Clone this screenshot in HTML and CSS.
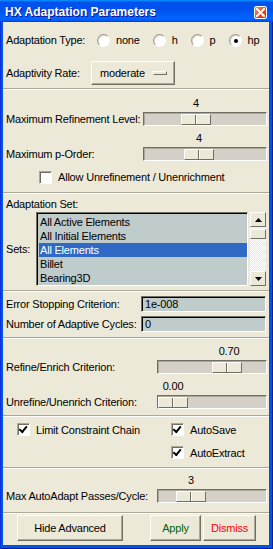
FILE: index.html
```html
<!DOCTYPE html>
<html lang="en">
<head>
  <meta charset="UTF-8" />
  <title>HX Adaptation Parameters</title>
  <link rel="stylesheet" href="styles.css">
</head>
<body>

  <div class="window">
    <div class="titlebar">
      <span class="title">HX Adaptation Parameters</span>
      <span class="close-btn">
        <svg width="9" height="9" viewBox="0 0 9 9"><path d="M1 1 L8 8 M8 1 L1 8" stroke="#fff" stroke-width="2" stroke-linecap="square"/></svg>
      </span>
    </div>

    <div class="content">

      <section class="group group-type">
        <div class="radio-row">
          <span class="lbl lbl-type">Adaptation Type:</span>
          <span class="radio"><span class="radio-circle"></span>none</span>
          <span class="radio"><span class="radio-circle"></span>h</span>
          <span class="radio"><span class="radio-circle"></span>p</span>
          <span class="radio"><span class="radio-circle checked"></span>hp</span>
        </div>
        <div class="rate-row">
          <span class="lbl lbl-rate">Adaptivity Rate:</span>
          <span class="menubutton">moderate<span class="indicator"></span></span>
        </div>
      </section>

      <hr class="sep">

      <section class="group group-levels">
        <div class="scale-row narrow">
          <span class="scale-label">Maximum Refinement Level:</span>
          <div class="scale-value-line"><span class="scale-value" style="left:53px">4</span></div>
          <div class="trough"><span class="thumb" style="left:37px"></span></div>
        </div>
        <div class="scale-row narrow second">
          <span class="scale-label">Maximum p-Order:</span>
          <div class="scale-value-line"><span class="scale-value" style="left:56px">4</span></div>
          <div class="trough"><span class="thumb" style="left:40px"></span></div>
        </div>
        <div class="check-row allow-row">
          <span class="checkbox"></span>Allow Unrefinement / Unenrichment
        </div>
      </section>

      <hr class="sep">

      <section class="group group-sets">
        <div class="sets-title">Adaptation Set:</div>
        <div class="sets-row">
          <span class="lbl lbl-sets">Sets:</span>
          <ul class="listbox">
            <li>All Active Elements</li>
            <li>All Initial Elements</li>
            <li class="selected">All Elements</li>
            <li>Billet</li>
            <li>Bearing3D</li>
          </ul>
          <div class="scrollbar">
            <span class="sb-btn"><svg width="7" height="4" viewBox="0 0 7 4"><path d="M3.5 0 L7 4 L0 4 Z" fill="#000"/></svg></span>
            <span class="sb-track"><span class="sb-thumb"></span></span>
            <span class="sb-btn"><svg width="7" height="4" viewBox="0 0 7 4"><path d="M0 0 L7 0 L3.5 4 Z" fill="#000"/></svg></span>
          </div>
        </div>
      </section>

      <hr class="sep">

      <section class="group group-entries">
        <div class="entry-row">
          <span class="lbl lbl-entry">Error Stopping Criterion:</span>
          <span class="entry">1e-008</span>
        </div>
        <div class="entry-row">
          <span class="lbl lbl-entry">Number of Adaptive Cycles:</span>
          <span class="entry">0</span>
        </div>
      </section>

      <hr class="sep">

      <section class="group group-criteria">
        <div class="scale-row wide">
          <span class="scale-label">Refine/Enrich Criterion:</span>
          <div class="scale-value-line"><span class="scale-value" style="left:72px">0.70</span></div>
          <div class="trough"><span class="thumb" style="left:54px"></span></div>
        </div>
        <div class="scale-row wide second">
          <span class="scale-label">Unrefine/Unenrich Criterion:</span>
          <div class="scale-value-line"><span class="scale-value" style="left:16px">0.00</span></div>
          <div class="trough"><span class="thumb" style="left:0px"></span></div>
        </div>
      </section>

      <hr class="sep">

      <section class="group group-checks">
        <div class="check-grid">
          <div class="check-row"><span class="checkbox checked"></span>Limit Constraint Chain</div>
          <div class="check-row"><span class="checkbox checked"></span>AutoSave</div>
          <div></div>
          <div class="check-row"><span class="checkbox checked"></span>AutoExtract</div>
        </div>
      </section>

      <hr class="sep">

      <section class="group group-passes">
        <div class="scale-row wide tight">
          <span class="scale-label">Max AutoAdapt Passes/Cycle:</span>
          <div class="scale-value-line"><span class="scale-value" style="left:34px">3</span></div>
          <div class="trough"><span class="thumb" style="left:18px"></span></div>
        </div>
      </section>

      <hr class="sep">

      <section class="group group-buttons">
        <button class="btn btn-hide">Hide Advanced</button>
        <button class="btn btn-apply">Apply</button>
        <button class="btn btn-dismiss">Dismiss</button>
      </section>

    </div>
  </div>

</body>
</html>
```

FILE: styles.css
```css
body {
  margin: 0;
  padding: 0;
  font-family: "Liberation Sans", Arial, sans-serif;
  font-size: 11px;
  letter-spacing: -0.2px;
  color: #000;
}

.window {
  width: 273px;
  height: 549px;
  display: flex;
  flex-direction: column;
  background: #0054e3;
  box-shadow: inset 1px 0 #0831d9, inset -1px 0 #001ea0, inset 0 -1px #001ea0;
}

/* title bar */
.titlebar {
  height: 22px;
  flex: none;
  display: flex;
  align-items: center;
  background: linear-gradient(#0997ff, #0053ee 10%, #0050ee 40%, #0066ff 85%, #005bff 92%, #003dd7);
}

.title {
  flex: 1;
  padding-left: 5px;
  padding-top: 1px;
  color: #fff;
  font-weight: bold;
  font-size: 12px;
  letter-spacing: 0;
  text-shadow: 1px 1px #0f1089;
}

.close-btn {
  width: 11px;
  height: 11px;
  margin: 2px 6px 0 0;
  display: flex;
  align-items: center;
  justify-content: center;
  border: 1px solid #fff;
  border-radius: 2px;
  background: linear-gradient(135deg, #f2937a, #e0512c 50%, #c4391a);
}

/* content */
.content {
  flex: 1;
  margin: 0 4px 4px 3px;
  background: #ece9d8;
  display: flex;
  flex-direction: column;
}

.sep {
  margin: 0;
  height: 0;
  border: none;
  border-top: 1px solid #aca899;
  border-bottom: 1px solid #fff;
}

.group {
  padding-left: 3px;
  padding-right: 3px;
}

.lbl {
  flex: none;
  white-space: nowrap;
}

/* radios and rate */
.group-type {
  padding-top: 7px;
  padding-bottom: 3px;
}

.radio-row {
  height: 22px;
  display: flex;
  align-items: center;
}

.lbl-type {
  width: 91px;
}

.radio {
  display: flex;
  align-items: center;
  margin-right: 13px;
}

.radio-circle {
  width: 11px;
  height: 11px;
  margin-right: 6px;
  border-radius: 50%;
  border: 1px solid;
  border-color: #9d9a8c #fff #fff #9d9a8c;
  background: #fff;
  box-shadow: inset 1px 1px #dcd9cc;
  position: relative;
}

.radio-circle.checked::after {
  content: "";
  position: absolute;
  left: 4px;
  top: 4px;
  width: 4px;
  height: 4px;
  border-radius: 50%;
  background: #000;
}

.rate-row {
  margin-top: 10px;
  height: 24px;
  display: flex;
  align-items: center;
}

.lbl-rate {
  width: 85px;
}

.menubutton {
  width: 84px;
  height: 24px;
  box-sizing: border-box;
  padding: 0 7px 0 8px;
  display: flex;
  align-items: center;
  justify-content: space-between;
  border: 1px solid;
  border-color: #fff #716f64 #716f64 #fff;
  box-shadow: inset -1px -1px #aca899;
}

.indicator {
  width: 14px;
  height: 4px;
  box-sizing: border-box;
  border: 1px solid;
  border-color: #fff #716f64 #716f64 #fff;
}

/* scales */
.group-levels {
  padding-top: 6px;
  padding-bottom: 6px;
}

.scale-row {
  display: grid;
  grid-template-rows: 15px 14px;
  row-gap: 1px;
}

.scale-row.narrow {
  grid-template-columns: 137px 124px;
}

.scale-row.wide {
  grid-template-columns: 151px 110px;
}

.scale-row.second {
  margin-top: 5px;
}

.scale-label {
  grid-row: 2;
  grid-column: 1;
  align-self: center;
  white-space: nowrap;
}

.scale-value-line {
  grid-row: 1;
  grid-column: 2;
  position: relative;
}

.scale-value {
  position: absolute;
  top: 1px;
  transform: translateX(-50%);
}

.trough {
  grid-row: 2;
  grid-column: 2;
  position: relative;
  box-sizing: border-box;
  background: #d4d0c8;
  border: 1px solid;
  border-color: #716f64 #fff #fff #716f64;
  box-shadow: inset 1px 1px #aca899;
}

.thumb {
  position: absolute;
  top: 1px;
  width: 30px;
  height: 11px;
  box-sizing: border-box;
  background: #ece9d8;
  border: 1px solid;
  border-color: #fff #716f64 #716f64 #fff;
}

.thumb::after {
  content: "";
  position: absolute;
  left: 13px;
  top: 0;
  bottom: 0;
  width: 1px;
  background: #716f64;
  box-shadow: 1px 0 #fff;
}

/* checkboxes */
.check-row {
  height: 17px;
  display: flex;
  align-items: center;
  white-space: nowrap;
}

.allow-row {
  margin-top: 7px;
  height: 18px;
  padding-left: 33px;
}

.checkbox {
  flex: none;
  width: 13px;
  height: 13px;
  margin-right: 6px;
  box-sizing: border-box;
  background: #fff;
  border: 1px solid;
  border-color: #aca899 #fff #fff #aca899;
  box-shadow: inset 1px 1px #716f64;
  position: relative;
}

.checkbox.checked::after {
  content: "";
  position: absolute;
  left: 3px;
  top: 1px;
  width: 3px;
  height: 6px;
  border: solid #000;
  border-width: 0 2px 2px 0;
  transform: rotate(40deg);
  transform-origin: 60% 40%;
}

.group-checks {
  padding-top: 4px;
  padding-bottom: 6px;
}

.check-grid {
  display: grid;
  grid-template-columns: 154px 1fr;
  row-gap: 6px;
  padding-left: 11px;
}

/* listbox */
.group-sets {
  padding-top: 2px;
  padding-bottom: 4px;
}

.sets-title {
  height: 16px;
  display: flex;
  align-items: center;
}

.sets-row {
  display: flex;
  align-items: center;
}

.lbl-sets {
  width: 30px;
}

.listbox {
  margin: 0;
  padding: 0;
  list-style: none;
  width: 214px;
  height: 74px;
  box-sizing: border-box;
  background: #c0cbcc;
  border: 1px solid;
  border-color: #716f64 #fff #fff #716f64;
  box-shadow: inset 1px 1px #000;
  padding: 2px 0 0 2px;
  overflow: hidden;
}

.listbox li {
  height: 14px;
  line-height: 14px;
  padding-left: 1px;
  white-space: nowrap;
}

.listbox li.selected {
  background: #316ac5;
  color: #fff;
}

.scrollbar {
  width: 16px;
  height: 74px;
  margin-left: 2px;
  display: flex;
  flex-direction: column;
}

.sb-btn {
  height: 15px;
  flex: none;
  box-sizing: border-box;
  display: flex;
  align-items: center;
  justify-content: center;
  background: #ece9d8;
  border: 1px solid;
  border-color: #fff #716f64 #716f64 #fff;
}

.sb-track {
  flex: 1;
  padding-top: 2px;
  background: repeating-conic-gradient(#fff 0 25%, #ece9d8 0 50%) 0 0 / 2px 2px;
}

.sb-thumb {
  display: block;
  height: 8px;
  background: #ece9d8;
  border: 1px solid;
  border-color: #fff #716f64 #716f64 #fff;
}

/* entries */
.group-entries {
  padding-top: 4px;
  padding-bottom: 5px;
}

.entry-row {
  height: 16px;
  display: flex;
  align-items: center;
}

.entry-row + .entry-row {
  margin-top: 4px;
}

.lbl-entry {
  width: 135px;
}

.entry {
  flex: 1;
  height: 16px;
  box-sizing: border-box;
  padding-left: 3px;
  display: flex;
  align-items: center;
  background: #c0cbcc;
  border: 1px solid;
  border-color: #716f64 #fff #fff #716f64;
  box-shadow: inset 1px 1px #000;
}

.group-criteria {
  padding-top: 5px;
  padding-bottom: 6px;
}

.group-passes {
  padding-top: 4px;
  padding-bottom: 9px;
}

/* buttons */
.group-buttons {
  padding: 1px 0 4px 14px;
  display: flex;
}

.btn {
  height: 26px;
  font-family: inherit;
  font-size: 11px;
  letter-spacing: inherit;
  background: #ece9d8;
  border: 1px solid;
  border-color: #fff #716f64 #716f64 #fff;
  box-shadow: inset -1px -1px #aca899;
  padding: 0;
}

.btn-hide {
  width: 106px;
  margin-right: 27px;
}

.btn-apply {
  width: 51px;
  margin-right: 2px;
  color: #006400;
}

.btn-dismiss {
  width: 53px;
  color: #ff0000;
}
```
